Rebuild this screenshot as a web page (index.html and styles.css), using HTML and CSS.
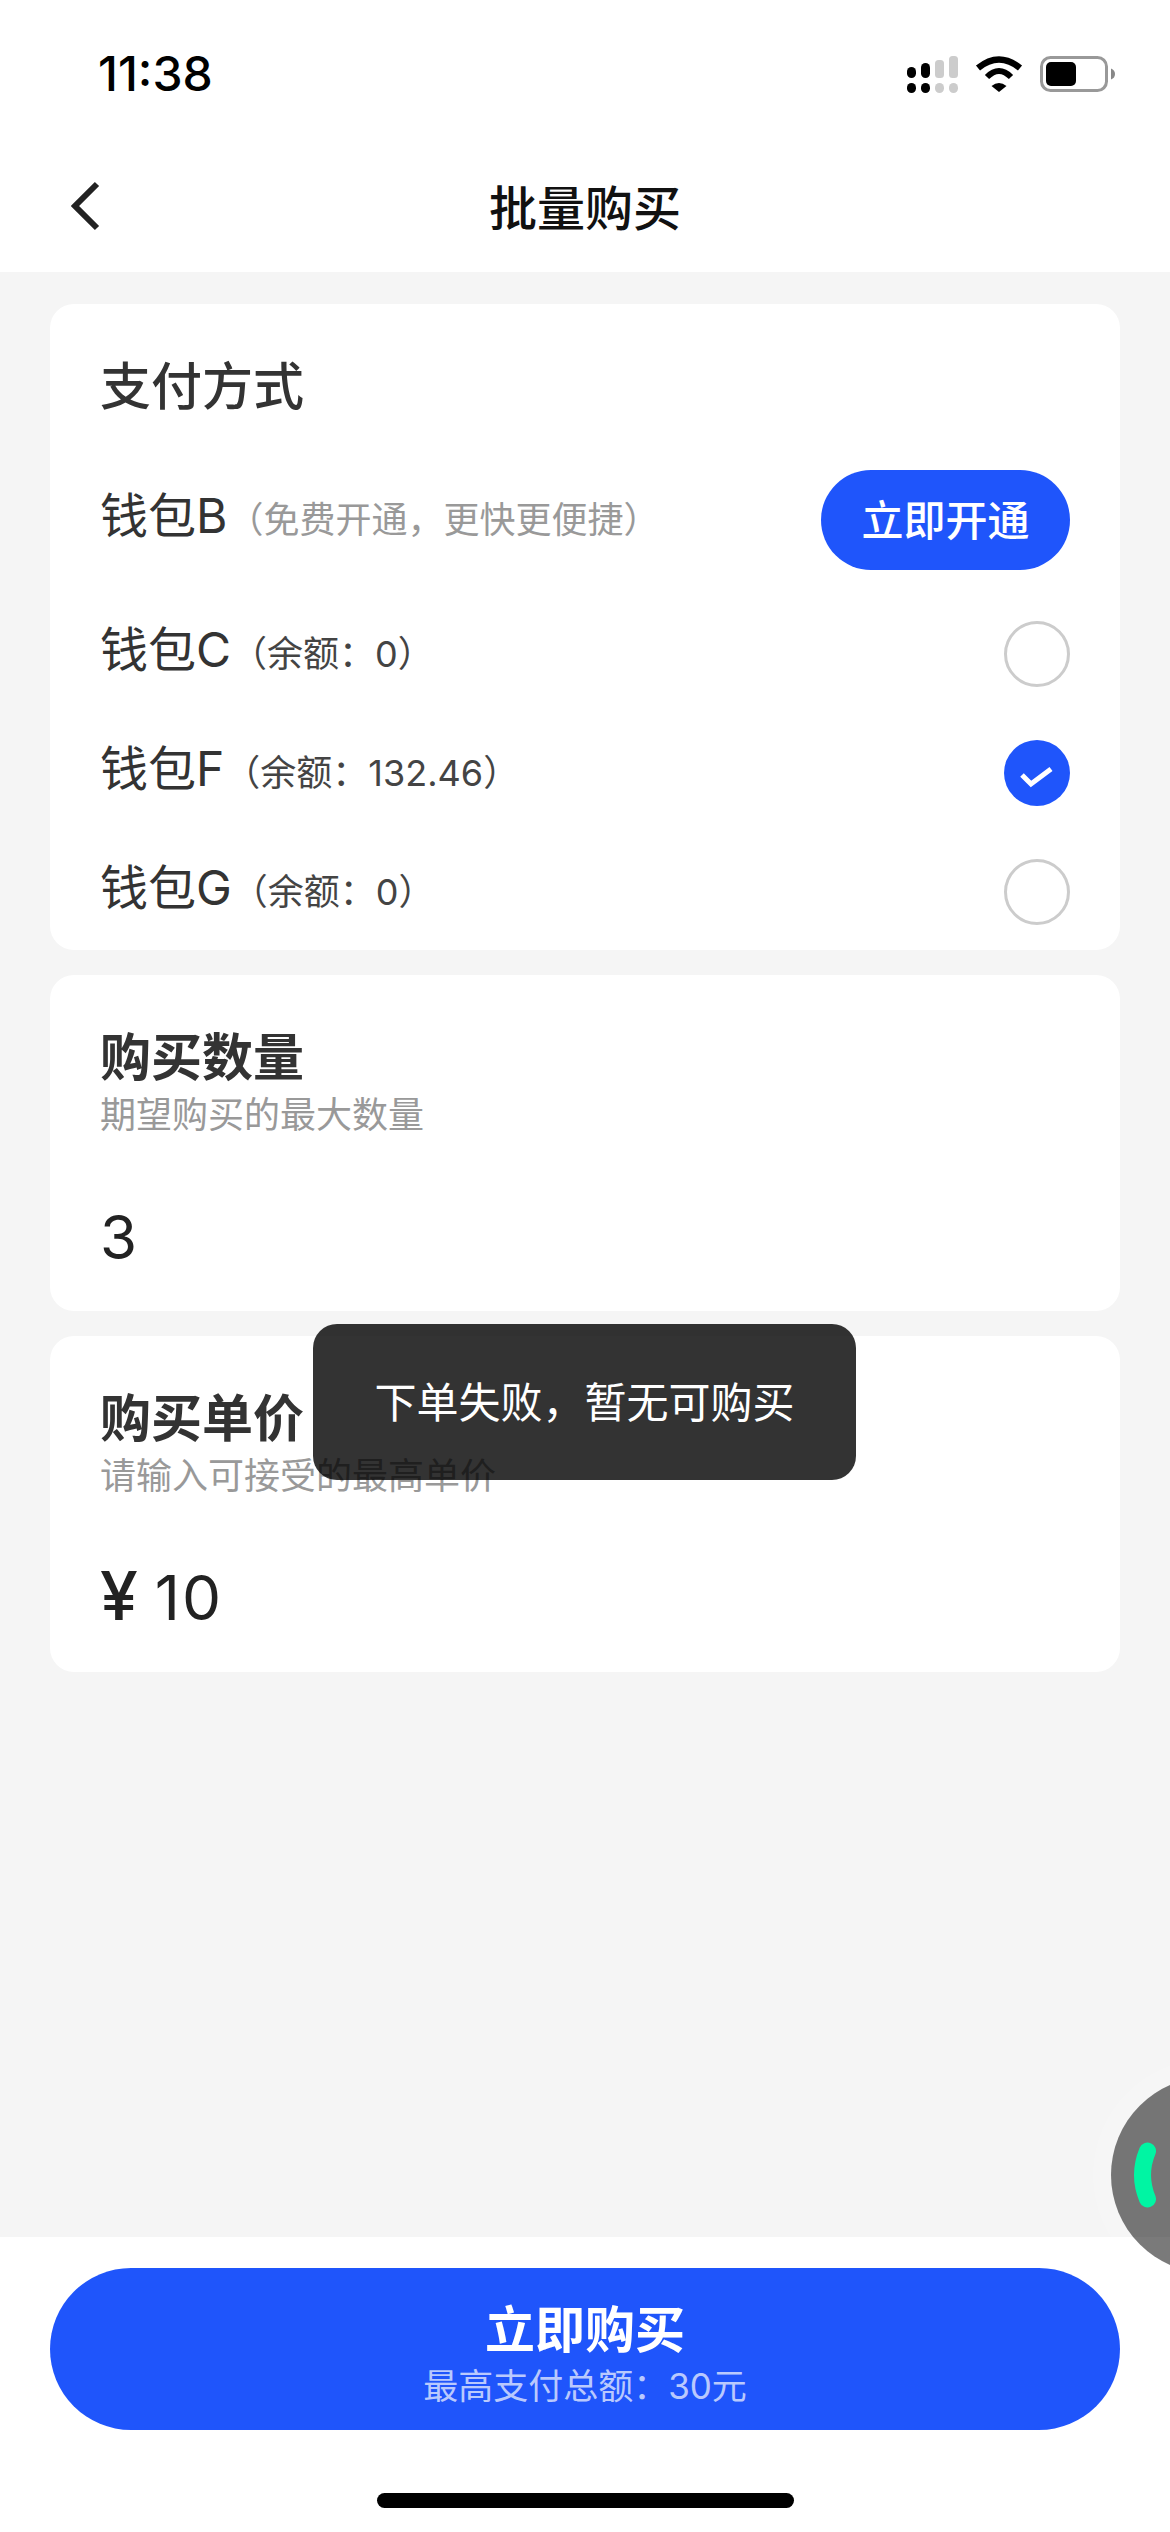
FILE: index.html
```html
<!DOCTYPE html>
<html lang="zh-CN">
<head>
    <meta charset="UTF-8">
    <meta name="viewport" content="width=device-width, initial-scale=1.0">
    <title>批量购买</title>
    <link rel="stylesheet" href="styles.css">
</head>
<body>
    <div class="page">
        <div class="status-bar">
            <span class="time">11:38</span>
            <div class="status-icons">
                <svg class="icon-signal" width="51" height="37" viewBox="0 0 51 37">
                    <g fill="#000">
                        <rect x="0" y="11" width="9" height="11" rx="4.5"/>
                        <rect x="14" y="7" width="9" height="15" rx="4.5"/>
                        <rect x="0" y="27" width="9" height="10" rx="4.5"/>
                        <rect x="14" y="27" width="9" height="10" rx="4.5"/>
                    </g>
                    <g fill="#ccc">
                        <rect x="28" y="4" width="9" height="18" rx="3.5"/>
                        <rect x="42" y="0" width="9" height="22" rx="3.5"/>
                        <rect x="28" y="27" width="9" height="10" rx="4.5"/>
                        <rect x="42" y="27" width="9" height="10" rx="4.5"/>
                    </g>
                </svg>
                <svg class="icon-wifi" width="48" height="36" viewBox="0 0 48 36">
                    <path d="M3 12Q24 -5 45 12" fill="none" stroke="#000" stroke-width="6.5"/>
                    <path d="M12 21Q24 9 36 21" fill="none" stroke="#000" stroke-width="6"/>
                    <path d="M16.5 30Q24 24 31.5 30L24 36Z" fill="#000"/>
                </svg>
                <svg class="icon-battery" width="75" height="36" viewBox="0 0 75 36">
                    <rect x="1.5" y="1.5" width="65" height="33" rx="9" fill="none" stroke="#999" stroke-width="3"/>
                    <rect x="6" y="6" width="30" height="24" rx="5" fill="#000"/>
                    <path d="M71 12.5Q75 14 75 18Q75 22 71 23.5Z" fill="#888"/>
                </svg>
            </div>
        </div>

        <div class="nav-bar">
            <svg class="back-icon" width="30" height="50" viewBox="0 0 30 50">
                <path d="M26 3L4 25L26 47" fill="none" stroke="#222" stroke-width="6"/>
            </svg>
            <h1 class="nav-title">批量购买</h1>
        </div>

        <div class="content">
            <div class="card pay-card">
                <h2 class="card-title pay-title">支付方式</h2>
                <div class="pay-row open-row">
                    <span class="wallet">钱包B<span class="wallet-note muted">（免费开通，更快更便捷）</span></span>
                    <button class="open-btn">立即开通</button>
                </div>
                <div class="pay-row">
                    <span class="wallet">钱包C<span class="wallet-note">（余额：0）</span></span>
                    <span class="radio"></span>
                </div>
                <div class="pay-row">
                    <span class="wallet">钱包F<span class="wallet-note">（余额：132.46）</span></span>
                    <span class="radio checked">
                        <svg width="66" height="66" viewBox="0 0 66 66">
                            <path d="M18 35L27 44L47 29" fill="none" stroke="#fff" stroke-width="5"/>
                        </svg>
                    </span>
                </div>
                <div class="pay-row">
                    <span class="wallet">钱包G<span class="wallet-note">（余额：0）</span></span>
                    <span class="radio"></span>
                </div>
            </div>

            <div class="card input-card">
                <h2 class="card-title">购买数量</h2>
                <p class="card-sub">期望购买的最大数量</p>
                <div class="card-value">3</div>
            </div>

            <div class="card input-card">
                <h2 class="card-title">购买单价</h2>
                <p class="card-sub">请输入可接受的最高单价</p>
                <div class="card-value"><span class="yen">¥</span><span class="price">10</span></div>
            </div>
        </div>

        <div class="bottom-bar">
            <button class="buy-btn">
                <span class="buy-label">立即购买</span>
                <span class="buy-total">最高支付总额：30元</span>
            </button>
            <div class="home-indicator"></div>
        </div>

        <div class="toast">下单失败，暂无可购买</div>

        <div class="float-ball">
            <svg width="40" height="80" viewBox="0 0 40 80">
                <path d="M17.5 16Q7.5 40 17.5 64" fill="none" stroke="#00f5a3" stroke-width="17" stroke-linecap="round"/>
            </svg>
        </div>
    </div>
</body>
</html>
```

FILE: styles.css
```css
* {
    box-sizing: border-box;
}

body {
    margin: 0;
    font-family: Inter, "Noto Sans CJK SC", sans-serif;
    color: #333;
}

.page {
    position: relative;
    display: flex;
    flex-direction: column;
    width: 1170px;
    height: 2532px;
    overflow: hidden;
    background-color: #f5f5f5;
}

.status-bar {
    display: flex;
    justify-content: space-between;
    align-items: center;
    height: 148px;
    padding: 0 55px 0 98px;
    background-color: #fff;
}

.time {
    padding-bottom: 2px;
    font-size: 48px;
    font-weight: 500;
    color: #000;
}

.status-icons {
    display: flex;
    align-items: center;
    gap: 17px;
}

.nav-bar {
    position: relative;
    display: flex;
    justify-content: center;
    align-items: center;
    height: 124px;
    padding-bottom: 10px;
    background-color: #fff;
}

.back-icon {
    position: absolute;
    left: 71px;
    top: 33px;
}

.nav-title {
    margin: 0;
    font-size: 48px;
    font-weight: 500;
    color: #111;
}

.content {
    display: flex;
    flex-direction: column;
    gap: 25px;
    flex: 1;
    padding: 32px 50px 0;
}

.card {
    padding: 0 50px;
    background-color: #fff;
    border-radius: 24px;
}

.pay-card {
    height: 646px;
    padding-top: 52px;
}

.card-title {
    margin: 0;
    font-size: 51px;
    line-height: 58px;
    font-weight: 700;
    color: #333;
}

.pay-title {
    font-weight: 500;
    line-height: 62px;
    margin-bottom: 52px;
}

.pay-row {
    display: flex;
    justify-content: space-between;
    align-items: center;
    height: 119px;
}

.open-row {
    height: 100px;
    margin-bottom: 24px;
}

.wallet {
    padding-bottom: 4px;
    font-size: 48px;
    line-height: 60px;
    color: #333;
}

.wallet-note {
    font-size: 36px;
    color: #444;
}

.muted {
    color: #999;
}

.open-btn {
    width: 249px;
    height: 100px;
    padding: 0 0 6px;
    border: 0;
    border-radius: 50px;
    background-color: #1f55fb;
    color: #fff;
    font-family: inherit;
    font-size: 42px;
    font-weight: 500;
}

.radio {
    width: 66px;
    height: 66px;
    border: 3px solid #ccc;
    border-radius: 50%;
}

.radio.checked {
    border: 0;
    background-color: #1f55fb;
}

.radio svg {
    display: block;
}

.input-card {
    height: 336px;
    padding-top: 54px;
}

.card-sub {
    margin: 0 0 54px;
    font-size: 36px;
    line-height: 56px;
    color: #999;
}

.card-value {
    font-size: 60px;
    line-height: 80px;
    color: #222;
}

.yen {
    margin-right: 17px;
    font-size: 68px;
    line-height: 0;
    font-weight: 500;
}

.price {
    font-size: 62px;
    letter-spacing: 2px;
}

.bottom-bar {
    display: flex;
    flex-direction: column;
    align-items: center;
    height: 295px;
    padding: 31px 50px 0;
    background-color: #fff;
}

.buy-btn {
    display: flex;
    flex-direction: column;
    justify-content: center;
    align-items: center;
    width: 100%;
    height: 162px;
    padding: 11px 0 0;
    border: 0;
    border-radius: 81px;
    background-color: #1f55fb;
    font-family: inherit;
}

.buy-label {
    font-size: 50px;
    line-height: 62px;
    font-weight: 700;
    color: #fff;
}

.buy-total {
    font-size: 35px;
    line-height: 50px;
    color: rgba(255, 255, 255, 0.7);
}

.home-indicator {
    width: 417px;
    height: 15px;
    margin-top: 63px;
    border-radius: 8px;
    background-color: #000;
}

.toast {
    position: absolute;
    left: 313px;
    top: 1324px;
    display: flex;
    justify-content: center;
    align-items: center;
    width: 543px;
    height: 156px;
    padding-bottom: 6px;
    border-radius: 24px;
    background-color: rgba(0, 0, 0, 0.8);
    color: #fff;
    font-size: 42px;
}

.float-ball {
    position: absolute;
    left: 1111px;
    top: 2077px;
    display: flex;
    align-items: center;
    width: 196px;
    height: 196px;
    padding-left: 19px;
    border-radius: 50%;
    background-color: rgba(0, 0, 0, 0.52);
    box-shadow: 0 0 0 18px rgba(255, 255, 255, 0.15);
}
```
